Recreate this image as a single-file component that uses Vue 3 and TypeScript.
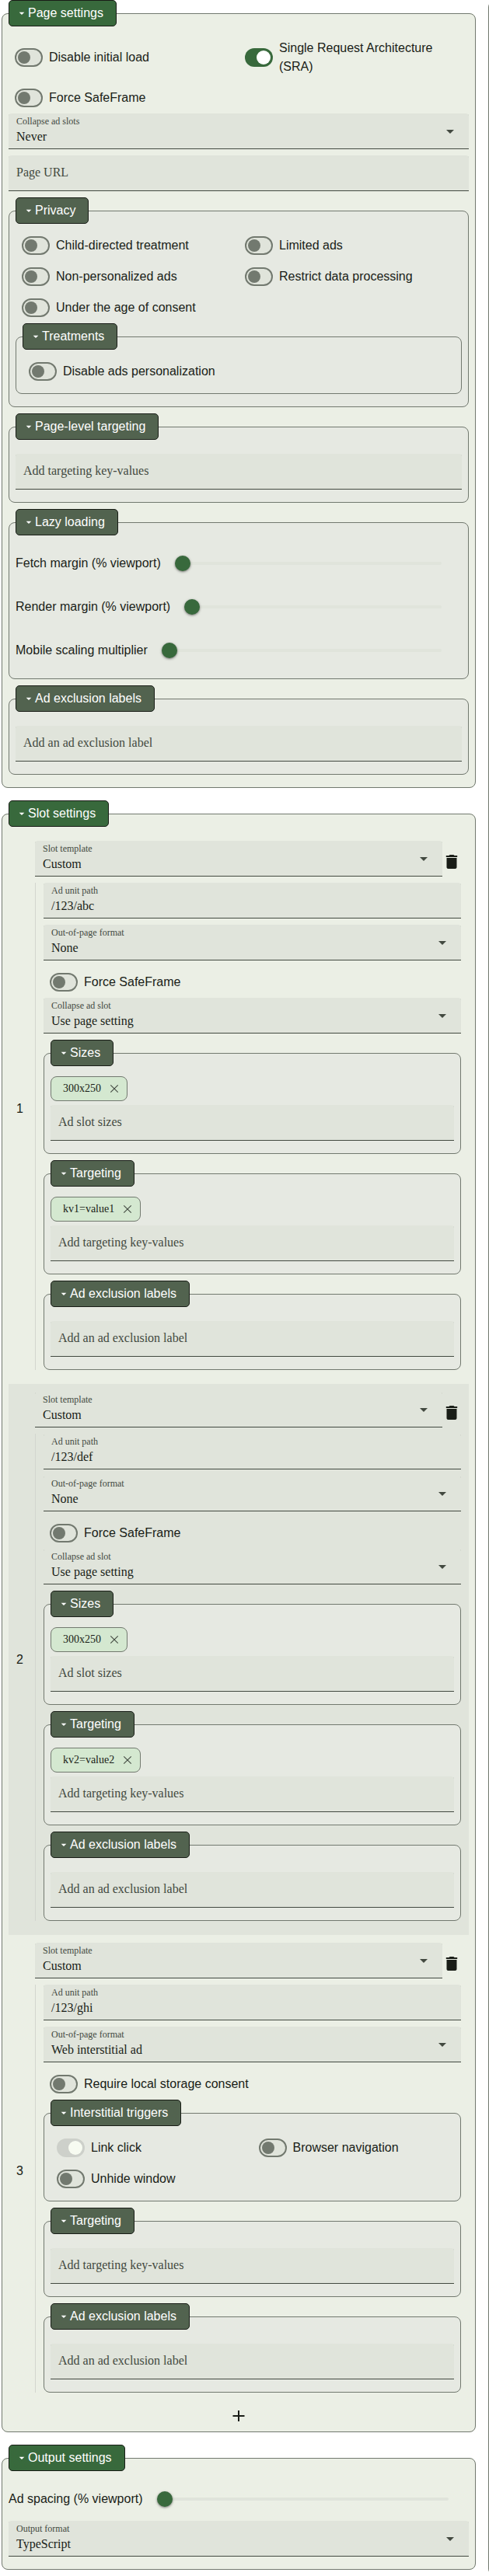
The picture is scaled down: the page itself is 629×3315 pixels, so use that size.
<script setup lang="ts">
import { h, type FunctionalComponent } from 'vue'

interface Toggle {
  label: string
  on?: boolean
  disabled?: boolean
}
interface Slot {
  path: string
  format: string
  toggle: string
  collapse?: string
  sizes?: string[]
  triggers?: Toggle[]
  targeting: string[]
}

const pageToggles: Toggle[] = [
  { label: 'Disable initial load' },
  { label: 'Single Request Architecture (SRA)', on: true },
  { label: 'Force SafeFrame' },
]
const privacyToggles: Toggle[] = [
  { label: 'Child-directed treatment' },
  { label: 'Limited ads' },
  { label: 'Non-personalized ads' },
  { label: 'Restrict data processing' },
  { label: 'Under the age of consent' },
]
const lazySliders = ['Fetch margin (% viewport)', 'Render margin (% viewport)', 'Mobile scaling multiplier']

const slots: Slot[] = [
  {
    path: '/123/abc',
    format: 'None',
    toggle: 'Force SafeFrame',
    collapse: 'Use page setting',
    sizes: ['300x250'],
    targeting: ['kv1=value1'],
  },
  {
    path: '/123/def',
    format: 'None',
    toggle: 'Force SafeFrame',
    collapse: 'Use page setting',
    sizes: ['300x250'],
    targeting: ['kv2=value2'],
  },
  {
    path: '/123/ghi',
    format: 'Web interstitial ad',
    toggle: 'Require local storage consent',
    triggers: [
      { label: 'Link click', on: true, disabled: true },
      { label: 'Browser navigation' },
      { label: 'Unhide window' },
    ],
    targeting: [],
  },
]

const Caret: FunctionalComponent = () =>
  h('svg', { viewBox: '0 0 24 24', 'aria-hidden': 'true' }, [h('path', { d: 'M7 10l5 5 5-5z' })])

const Heading: FunctionalComponent<{ text: string }> = (props) =>
  h('legend', { class: 'heading' }, [h(Caret), h('span', props.text)])
Heading.props = ['text']

const Field: FunctionalComponent<{ label: string; value?: string; select?: boolean }> = (props) =>
  h('div', { class: ['field', { empty: !props.value }] }, [
    h('div', { class: 'field-text' }, [
      h('span', { class: 'field-label' }, props.label),
      props.value ? h('span', { class: 'field-value' }, props.value) : null,
    ]),
    props.select ? h(Caret) : null,
  ])
Field.props = { label: String, value: String, select: Boolean }

const Switch: FunctionalComponent<Toggle> = (props) =>
  h('label', { class: ['switch', { on: props.on, disabled: props.disabled }] }, [
    h('span', { class: 'track' }, [h('span', { class: 'handle' })]),
    h('span', { class: 'switch-label' }, props.label),
  ])
Switch.props = { label: String, on: Boolean, disabled: Boolean }

const Slider: FunctionalComponent<{ label: string }> = (props) =>
  h('div', { class: 'slider' }, [
    h('span', props.label),
    h('span', { class: 'rail' }, [h('span', { class: 'thumb' }), h('span', { class: 'bar' })]),
  ])
Slider.props = ['label']

const closePath =
  'm249 849-42-42 231-231-231-231 42-42 231 231 231-231 42 42-231 231 231 231-42 42-231-231-231 231Z'
const Chips: FunctionalComponent<{ items: string[] }> = (props) =>
  h(
    'div',
    { class: 'chips' },
    props.items.map((item) =>
      h('span', { class: 'chip' }, [
        h('span', item),
        h('svg', { viewBox: '0 96 960 960' }, [h('path', { d: closePath })]),
      ]),
    ),
  )
Chips.props = ['items']
</script>

<template>
  <div class="page">
    <main class="settings">
      <fieldset class="group primary">
        <Heading text="Page settings" />
        <div class="toggles">
          <Switch v-for="t in pageToggles" :key="t.label" v-bind="t" />
        </div>
        <Field label="Collapse ad slots" value="Never" select />
        <Field label="Page URL" />

        <fieldset class="group">
          <Heading text="Privacy" />
          <div class="toggles">
            <Switch v-for="t in privacyToggles" :key="t.label" v-bind="t" />
          </div>
          <fieldset class="group">
            <Heading text="Treatments" />
            <Switch label="Disable ads personalization" />
          </fieldset>
        </fieldset>

        <fieldset class="group">
          <Heading text="Page-level targeting" />
          <Chips :items="[]" />
          <Field label="Add targeting key-values" />
        </fieldset>

        <fieldset class="group">
          <Heading text="Lazy loading" />
          <Slider v-for="s in lazySliders" :key="s" :label="s" />
        </fieldset>

        <fieldset class="group">
          <Heading text="Ad exclusion labels" />
          <Chips :items="[]" />
          <Field label="Add an ad exclusion label" />
        </fieldset>
      </fieldset>

      <fieldset class="group primary">
        <Heading text="Slot settings" />
        <section v-for="(slot, i) in slots" :key="slot.path" class="slot">
          <span class="slot-number">{{ i + 1 }}</span>
          <div class="slot-body">
            <div class="slot-template">
              <Field label="Slot template" value="Custom" select />
              <svg class="icon" viewBox="0 0 24 24">
                <path d="M5.5 19c0 1.1.9 2 2 2h9c1.1 0 2-.9 2-2V7h-13v12zM19.2 4h-3.7l-1-1h-5l-1 1H4.8v2h14.4V4z" />
              </svg>
            </div>
            <div class="slot-config">
              <Field label="Ad unit path" :value="slot.path" />
              <Field label="Out-of-page format" :value="slot.format" select />
              <Switch :label="slot.toggle" />
              <Field v-if="slot.collapse" label="Collapse ad slot" :value="slot.collapse" select />
              <fieldset v-if="slot.sizes" class="group">
                <Heading text="Sizes" />
                <Chips :items="slot.sizes" />
                <Field label="Ad slot sizes" />
              </fieldset>
              <fieldset v-if="slot.triggers" class="group">
                <Heading text="Interstitial triggers" />
                <div class="toggles">
                  <Switch v-for="t in slot.triggers" :key="t.label" v-bind="t" />
                </div>
              </fieldset>
              <fieldset class="group">
                <Heading text="Targeting" />
                <Chips :items="slot.targeting" />
                <Field label="Add targeting key-values" />
              </fieldset>
              <fieldset class="group">
                <Heading text="Ad exclusion labels" />
                <Chips :items="[]" />
                <Field label="Add an ad exclusion label" />
              </fieldset>
            </div>
          </div>
        </section>
        <div class="add">
          <svg class="icon" viewBox="0 0 24 24"><path d="M19.5 13H13v6h-2v-6H4.5v-2H11V5h2v6h6.5v2z" /></svg>
        </div>
      </fieldset>

      <fieldset class="group primary">
        <Heading text="Output settings" />
        <Slider label="Ad spacing (% viewport)" />
        <Field label="Output format" value="TypeScript" select />
      </fieldset>
    </main>
    <aside class="preview"></aside>
  </div>
</template>

<style>
body {
  background: #fff;
  overflow: hidden;
}
</style>

<style scoped>
.page {
  display: flex;
  height: 3315px;
  overflow: hidden;
  color: #191d17;
  font: 16px/24px 'Liberation Sans', Arial, sans-serif;
}
.page :deep(*) {
  box-sizing: border-box;
}
.page :deep(svg) {
  display: block;
  flex: none;
  fill: currentColor;
}
.settings {
  width: 610px;
  margin: 0 16px 0 2px;
  flex: none;
}
.preview {
  flex: none;
  width: 40px;
  height: 3313px;
  margin-top: 1px;
  border: 1px solid #72796f;
  border-radius: 8px;
}

.group {
  min-width: 0;
  margin: 0 0 8px;
  padding: 8px;
  border: 1px solid #72796f;
  border-radius: 8px;
  background: #e6e9e2;
}
.group.primary {
  margin-bottom: 16px;
  background: #ebefe5;
}
.group :deep(> .heading) {
  display: flex;
  align-items: center;
  height: 34px;
  padding: 0 16px 0 8px;
  border: 1px solid #191d17;
  border-radius: 5px;
  background: #52634f;
  color: #fff;
  line-height: 18px;
}
.group.primary > :deep(.heading) {
  background: #38693c;
}
.group .group > :deep(.heading) {
  background: #52634f;
}
.group :deep(.heading svg) {
  width: 16px;
  height: 16px;
}

.toggles {
  display: grid;
  grid-template-columns: 1fr 1fr;
}
.page :deep(.switch) {
  display: flex;
  align-items: center;
  gap: 8px;
  padding: 8px;
}
.page :deep(.track) {
  display: flex;
  flex: none;
  align-items: center;
  width: 36px;
  height: 24px;
  padding-left: 2px;
  border: 2px solid #72796f;
  border-radius: 12px;
  background: #e0e4db;
}
.page :deep(.handle) {
  width: 16px;
  height: 16px;
  border-radius: 50%;
  background: #72796f;
}
.page :deep(.on .track) {
  justify-content: flex-end;
  padding: 0 3px;
  border: 0;
  background: #38693c;
}
.page :deep(.on .handle) {
  width: 18px;
  height: 18px;
  background: #fff;
}
.page :deep(.disabled .track) {
  background: #cdd0ca;
}
.page :deep(.disabled .handle) {
  background: #f7fbf1;
}

.page :deep(.field) {
  display: flex;
  align-items: center;
  justify-content: space-between;
  height: 46px;
  margin-bottom: 8px;
  padding: 0 12px 0 10px;
  border-radius: 4px 4px 0 0;
  background: #e0e4db;
  box-shadow: inset 0 -1px #424940;
  color: #424940;
  font-family: 'Liberation Serif', 'Times New Roman', serif;
}
.page :deep(.field svg) {
  width: 24px;
  height: 24px;
}
.page :deep(.field-text) {
  display: flex;
  flex-direction: column;
  padding-bottom: 2px;
}
.page :deep(.field-label) {
  font-size: 12px;
  line-height: 16px;
}
.page :deep(.empty .field-label) {
  font-size: 16px;
  line-height: 24px;
}
.page :deep(.field-value) {
  color: #191d17;
}

.page :deep(.chips) {
  display: flex;
  gap: 8px;
  padding: 5px 0;
}
.page :deep(.chip) {
  display: flex;
  align-items: center;
  gap: 8px;
  height: 32px;
  padding: 0 7px 0 15px;
  border: 1px solid #72796f;
  border-radius: 8px;
  background: #d4e8d0;
  font: 14px/20px 'Liberation Serif', 'Times New Roman', serif;
}
.page :deep(.chip svg) {
  width: 18px;
  height: 18px;
  color: #424940;
}

.page :deep(.slider) {
  display: flex;
  align-items: center;
  height: 56px;
}
.page :deep(.rail) {
  display: flex;
  flex: 1;
  align-items: center;
  margin: 0 26px 0 18px;
}
.page :deep(.thumb) {
  z-index: 1;
  flex: none;
  width: 20px;
  height: 20px;
  border-radius: 50%;
  background: #38693c;
  box-shadow: 0 1px 2px rgba(0, 0, 0, 0.3), 0 1px 3px 1px rgba(0, 0, 0, 0.15);
}
.page :deep(.bar) {
  flex: 1;
  height: 4px;
  margin-left: -8px;
  border-radius: 2px;
  background: #e0e4db;
}

.slot {
  display: flex;
  align-items: center;
  padding: 10px;
}
.slot:nth-of-type(even) {
  background: #e0e4db;
}
.slot-number {
  flex: none;
  width: 24px;
}
.slot-body {
  flex: 1;
}
.slot-template {
  display: flex;
  align-items: center;
}
.slot-template :deep(.field) {
  flex: 1;
}
.icon {
  width: 24px;
  height: 24px;
}
.slot-config {
  padding-left: 10px;
  border-left: 1px solid #d3d6cf;
}
.slot-config .group {
  margin-bottom: 8px;
}
.add {
  display: flex;
  justify-content: center;
}
</style>
